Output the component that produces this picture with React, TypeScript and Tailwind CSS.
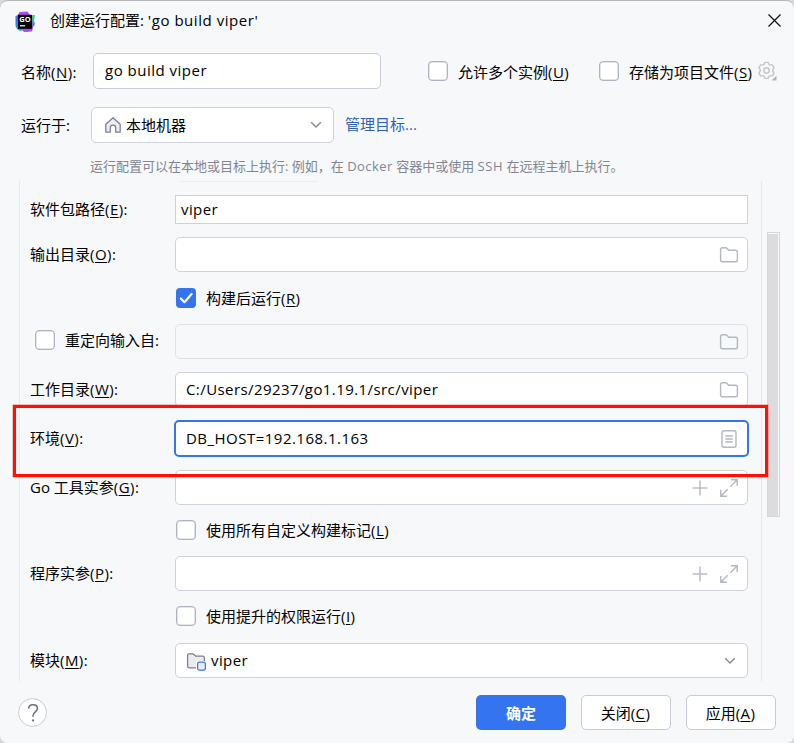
import type { ReactNode } from 'react';

function Mnemonic({ k, colon = false }: { k: string; colon?: boolean }) {
  return (
    <span className="tracking-[0.45px]">
      (<span className="underline decoration-1 underline-offset-[2px]">{k}</span>){colon ? ':' : ''}
    </span>
  );
}

function Checkbox({ checked = false }: { checked?: boolean }) {
  if (checked) {
    return (
      <span className="flex h-5 w-5 shrink-0 items-center justify-center rounded-[4px] bg-[#3574f0]">
        <svg width="20" height="20" viewBox="0 0 20 20" fill="none">
          <path d="M4.9 10.6 8.5 14.2 15.6 6" stroke="#fff" strokeWidth="2.2" strokeLinecap="round" strokeLinejoin="round" />
        </svg>
      </span>
    );
  }
  return <span className="h-5 w-5 shrink-0 rounded-[4px] border border-[#aeb3c2] bg-white shadow-[inset_0_0_0_0.5px_#c9ccd6]" />;
}

function FolderIcon() {
  return (
    <svg width="20" height="20" viewBox="0 0 20 20" fill="none" className="shrink-0">
      <path d="M1.6 4.600c0-1.200.7-1.800 1.800-1.800h3.200c.5 0 .8.1 1.200.5l1.900 1.900h6.900c1.100 0 1.800.7 1.800 1.800v8c0 1.100-.7 1.800-1.800 1.800H3.400c-1.100 0-1.800-.7-1.800-1.800z" stroke="#b3b7c6" strokeWidth="1.4" />
    </svg>
  );
}

function ListIcon() {
  return (
    <svg width="20" height="20" viewBox="0 0 20 20" fill="none" stroke="#b3b7c6" strokeWidth="1.4" className="shrink-0">
      <rect x="3" y="1.8" width="14" height="16.4" rx="2" />
      <path d="M6.3 7h7.4M6.3 10h7.4M6.3 13h7.4" />
    </svg>
  );
}

function PlusExpand() {
  return (
    <span className="flex items-center gap-[9px]">
      <svg width="20" height="20" viewBox="0 0 20 20" fill="none" stroke="#b9bcc9" strokeWidth="1.5">
        <path d="M10 2.6v14.8M2.6 10h14.8" />
      </svg>
      <svg width="20" height="20" viewBox="0 0 20 20" fill="none" stroke="#b3b7c6" strokeWidth="1.4">
        <path d="M12 1.8h6.2V8M18 2l-6.7 6.700M8 18.200H1.800V12M2 18l6.700-6.700" />
      </svg>
    </span>
  );
}

function Chevron() {
  return (
    <svg width="12" height="8" viewBox="0 0 12 8" fill="none" className="shrink-0">
      <path d="M1.200 1.200 6 6l4.800-4.800" stroke="#878b99" strokeWidth="1.4" />
    </svg>
  );
}

function GoLandLogo() {
  return (
    <svg width="22" height="22" viewBox="0 0 22 22" className="mt-[2px]">
      <defs>
        <linearGradient id="left" x1="0" y1="0" x2="0" y2="1">
          <stop offset="0" stopColor="#8b5cf6" />
          <stop offset="0.4" stopColor="#1c7df2" />
          <stop offset="1" stopColor="#1aa8f5" />
        </linearGradient>
        <linearGradient id="right" x1="0" y1="0" x2="0.3" y2="1">
          <stop offset="0" stopColor="#3bea62" />
          <stop offset="0.4" stopColor="#2fc7a4" />
          <stop offset="1" stopColor="#8a45f4" />
        </linearGradient>
      </defs>
      <path d="M6 1.500 3 4.500 1.500 5v10l1.500 3 3 2 6-2V2z" fill="url(#left)" />
      <path d="M12 4.500l9-.5-1 6 1 3-3 5-5 3-3-2z" fill="url(#right)" />
      <path d="M5.500 1l8-.5 3 4H4z" fill="#b04df5" />
      <path d="M7 18l3 3 8-.5 1-4z" fill="#a94af2" />
      <rect x="4" y="3.800" width="14" height="14" fill="#000" />
      <rect x="6" y="14.200" width="5" height="1.200" fill="#fff" />
      <text x="5.200" y="10.800" fontSize="7.500" fontWeight="700" fill="#fff" textLength="11.500" className="font-['Open_Sans',sans-serif]">GO</text>
    </svg>
  );
}

function Field({ children, icon, kind = 'normal' }: { children?: ReactNode; icon?: ReactNode; kind?: 'normal' | 'disabled' | 'focus' | 'plain' }) {
  const look = {
    normal: 'h-[35px] rounded-[5px] border border-[#cfd1db] bg-white pl-[10px] pr-[8px]',
    disabled: 'h-[35px] rounded-[5px] border border-[#dfe1e7] bg-[#f7f8fa] pl-[10px] pr-[8px]',
    focus: 'h-[37px] -mx-px rounded-[5px] border-2 border-[#3574f0] bg-white pl-[10px] pr-[8px]',
    plain: 'h-[29px] border border-[#cfd1db] bg-white pl-[5px]',
  }[kind];
  return (
    <div className={`flex min-w-0 flex-1 items-center justify-between ${look}`}>
      <span className="flex items-center whitespace-nowrap pb-[2px] tracking-[0.42px]">{children}</span>
      {icon}
    </div>
  );
}

function Row({ label, className, children }: { label?: ReactNode; className: string; children: ReactNode }) {
  return (
    <div className={`flex items-center ${className}`}>
      <div className="flex w-[145px] shrink-0 items-center whitespace-nowrap pb-px">{label}</div>
      {children}
    </div>
  );
}

export default function App() {
  return (
    <div className="h-[743px] w-[794px] overflow-hidden bg-[#d9dadc]">
      <div className="relative flex h-full flex-col rounded-[8px] border-t border-[#b4b5b8] bg-[#f7f8fa] font-['Open_Sans','Noto_Sans_CJK_SC',sans-serif] text-[15px] leading-[20px] text-black">
        <header className="flex h-[39px] shrink-0 items-center pl-[14px] pr-[13px]">
          <GoLandLogo />
          <span className="ml-[14px] whitespace-nowrap pb-[2px]">
            创建运行配置: <span className="tracking-[0.55px]">'go build viper'</span>
          </span>
          <svg className="ml-auto" width="13" height="13" viewBox="0 0 13 13">
            <path d="M.5.5l12 12M12.500.5l-12 12" stroke="#111" strokeWidth="1.250" />
          </svg>
        </header>

        <div className="mt-[13px] flex h-[36px] shrink-0 items-center pl-[21px]">
          <span className="w-[72px] whitespace-nowrap pt-[2px]">名称<Mnemonic k="N" colon /></span>
          <div className="flex h-[36px] w-[288px] items-center rounded-[5px] border border-[#c9ccd6] bg-white pb-[2px] pl-[11px] tracking-[0.5px]">go build viper</div>
          <div className="ml-[47px] flex w-[171px] items-center gap-[10px] whitespace-nowrap">
            <Checkbox />
            <span className="pt-[2px]">允许多个实例<Mnemonic k="U" /></span>
          </div>
          <div className="flex items-center gap-[10px] whitespace-nowrap">
            <Checkbox />
            <span className="w-[123px] pt-[2px]">存储为项目文件<Mnemonic k="S" /></span>
          </div>
          <svg className="ml-[5px] shrink-0" width="20" height="20" viewBox="0 0 20 20" fill="none" stroke="#c4c5c9" strokeWidth="1.400">
            <path d="M6.600 3.900 8 1.400h3l1.400 2.500h3L17 6.600 15.500 9.400 17 12.200l-1.600 2.700h-3L11 17.400H8l-1.400-2.500h-3L2 12.200l1.500-2.800L2 6.600l1.600-2.700z" strokeLinejoin="round" />
            <circle cx="9.500" cy="9.400" r="2.700" />
            <path d="M19.500 14.500v5h-5z" fill="#b4b5b8" stroke="none" />
          </svg>
        </div>

        <div className="mt-[18px] flex h-[36px] shrink-0 items-center pl-[21px]">
          <span className="w-[70px] whitespace-nowrap">运行于:</span>
          <div className="flex h-[36px] w-[243px] items-center rounded-[5px] border border-[#cfd1db] bg-white pl-[12px] pr-[11px]">
            <svg width="18" height="18" viewBox="0 0 18 18" fill="#ebecf0" stroke="#7b7f8c" strokeWidth="1.250">
              <path d="M1.800 8.300 9 1.700l7.200 6.600v7.900h-4.500v-4.400a2.700 2.700 0 0 0-5.400 0v4.400H1.800z" strokeLinejoin="round" />
            </svg>
            <span className="ml-[4px] whitespace-nowrap">本地机器</span>
            <span className="ml-auto"><Chevron /></span>
          </div>
          <span className="ml-[11px] whitespace-nowrap pb-[2px] text-[#315fbd]">管理目标...</span>
        </div>

        <div className="mt-[13px] h-[20px] shrink-0 whitespace-nowrap pl-[90px] text-[13px] text-[#818594]">
          运行配置可以在本地或目标上执行: 例如，在 <span className="tracking-[0.45px]">Docker</span> 容器中或使用 <span className="tracking-[0.6px]">SSH</span> 在远程主机上执行。
        </div>

        <div className="mt-[5px] flex h-[500px] shrink-0 pl-[19px]">
          <div className="relative flex w-[743px] flex-col border-x border-[#e6e7eb] pl-[10px] pr-[13px]">
            <div className="absolute left-[159px] top-0 h-px w-[139px] bg-[#ebecf0]" />
            <Row className="mt-[14px] h-[29px]" label={<>软件包路径<Mnemonic k="E" colon /></>}>
              <Field kind="plain">viper</Field>
            </Row>
            <Row className="mt-[13px] h-[35px]" label={<>输出目录<Mnemonic k="O" colon /></>}>
              <Field icon={<FolderIcon />} />
            </Row>
            <Row className="mt-[16px] h-[20px]">
              <span className="ml-px flex items-center gap-[10px] whitespace-nowrap">
                <Checkbox checked />
                <span>构建后运行<Mnemonic k="R" /></span>
              </span>
            </Row>
            <Row
              className="mt-[16px] h-[35px]"
              label={<span className="ml-[5px] flex items-center gap-[10px] pb-[2px]"><Checkbox />重定向输入自:</span>}
            >
              <Field kind="disabled" icon={<FolderIcon />} />
            </Row>
            <Row className="mt-[13px] h-[35px]" label={<>工作目录<Mnemonic k="W" colon /></>}>
              <Field icon={<FolderIcon />}>C:/Users/29237/go1.19.1/src/viper</Field>
            </Row>
            <Row className="mt-[13px] h-[37px]" label={<>环境<Mnemonic k="V" colon /></>}>
              <Field kind="focus" icon={<ListIcon />}><span className="tracking-[0.48px]">DB_HOST=192.168.1.163</span></Field>
            </Row>
            <Row className="mt-[13px] h-[35px]" label={<>Go 工具实参<Mnemonic k="G" colon /></>}>
              <Field icon={<PlusExpand />} />
            </Row>
            <Row className="mt-[15px] h-[20px]">
              <span className="ml-px flex items-center gap-[10px] whitespace-nowrap">
                <Checkbox />
                <span>使用所有自定义构建标记<Mnemonic k="L" /></span>
              </span>
            </Row>
            <Row className="mt-[16px] h-[35px]" label={<>程序实参<Mnemonic k="P" colon /></>}>
              <Field icon={<PlusExpand />} />
            </Row>
            <Row className="mt-[15px] h-[20px]">
              <span className="ml-px flex items-center gap-[10px] whitespace-nowrap">
                <Checkbox />
                <span>使用提升的权限运行<Mnemonic k="I" /></span>
              </span>
            </Row>
            <Row className="mt-[17px] h-[35px]" label={<span className="pb-px">模块<Mnemonic k="M" colon /></span>}>
              <Field icon={<span className="mr-[3px]"><Chevron /></span>}>
                <svg width="20" height="20" viewBox="0 0 20 20" fill="none" className="mt-[2px]">
                  <path d="M1.600 4.600c0-1.200.7-1.800 1.800-1.800h3.200c.5 0 .8.1 1.200.5l1.900 1.900h6.900c1.100 0 1.800.7 1.800 1.800v8c0 1.100-.7 1.800-1.800 1.800H3.400c-1.100 0-1.800-.7-1.800-1.800z" fill="#ebecf0" stroke="#7b7f8c" strokeWidth="1.250" />
                  <rect x="10" y="10" width="10" height="10" fill="#fff" />
                  <rect x="11.600" y="11.200" width="7.800" height="7.800" rx="1.800" fill="#e7effd" stroke="#3574f0" strokeWidth="1.250" />
                </svg>
                <span className="ml-[5px]">viper</span>
              </Field>
            </Row>
          </div>
          <div className="ml-[5px] mt-[51px] h-[285px] w-[13px] border border-[#d5d6d8] bg-[#dcdcde] shadow-[inset_-1px_1px_0_#f7f8fa]" />
        </div>

        <footer className="mt-[14px] flex h-[35px] shrink-0 items-center pl-[18px] pr-[18px]">
          <div className="flex h-[29px] w-[29px] items-center justify-center rounded-full border border-[#c9ccd6] bg-white">
            <svg width="14" height="20" viewBox="0 0 14 20" fill="none" stroke="#6c707e" strokeWidth="1.500">
              <path d="M2.600 5.600C2.800 3.200 4.500 1.800 7 1.800s4.400 1.500 4.400 3.700c0 3.400-4.400 3.300-4.400 7.200v1" />
              <circle cx="7" cy="17.400" r="1.100" fill="#6c707e" stroke="none" />
            </svg>
          </div>
          <div className="ml-auto flex gap-[15px]">
            <div className="flex h-[35px] w-[90px] items-center justify-center rounded-[5px] bg-[#3574f0] font-semibold text-white">确定</div>
            <div className="flex h-[35px] w-[90px] items-center justify-center rounded-[5px] border border-[#c9ccd6] bg-white pr-px">关闭<Mnemonic k="C" /></div>
            <div className="flex h-[35px] w-[90px] items-center justify-center rounded-[5px] border border-[#c9ccd6] bg-white pr-px">应用<Mnemonic k="A" /></div>
          </div>
        </footer>

        <div className="pointer-events-none absolute left-[13px] top-[404px] h-[72px] w-[755px] border-[3px] border-[#ff0f05] shadow-[0_0_0_0.5px_rgba(255,15,5,0.5)]" />
      </div>
    </div>
  );
}
